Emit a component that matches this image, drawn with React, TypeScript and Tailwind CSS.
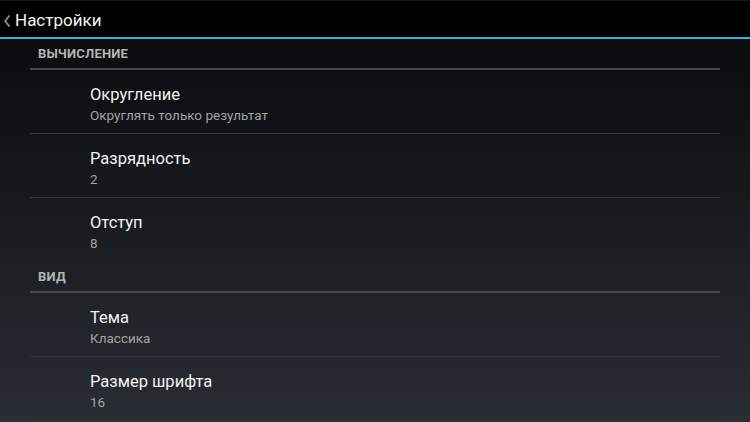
const font = { fontFamily: "Roboto, 'Noto Sans', sans-serif" }

type Item = { title: string; summary: string; last?: boolean }

const sections: { name: string; items: Item[] }[] = [
    {
        name: 'Вычисление',
        items: [
            { title: 'Округление', summary: 'Округлять только результат' },
            { title: 'Разрядность', summary: '2' },
            { title: 'Отступ', summary: '8', last: true },
        ],
    },
    {
        name: 'Вид',
        items: [
            { title: 'Тема', summary: 'Классика' },
            { title: 'Размер шрифта', summary: '16' },
        ],
    },
]

function Pref({ item }: { item: Item }) {
    return (
        <div className={item.last ? 'h-[64px]' : 'h-[64px] border-b border-[#33363a]'}>
            <div className="pl-[60px] pt-[15px]">
                <p className="text-[16.5px] leading-[20px] text-[#f2f2f2]">{item.title}</p>
                <p className="mt-[1px] text-[13.5px] leading-[18px] text-[#a3a3a3]">{item.summary}</p>
            </div>
        </div>
    )
}

export default function App() {
    return (
        <div className="w-[750px] h-[422px] overflow-hidden flex flex-col bg-black" style={font}>
            <div className="h-[37px] shrink-0 bg-black border-t border-[#151515] flex items-center pt-[3px]">
                <svg className="ml-[3px] w-[8px] h-[14px]" viewBox="0 0 8 14" fill="none">
                    <path d="M6.5 1.5 L2.2 7 L6.5 12.5" stroke="#8c8c8c" strokeWidth="1.9" />
                </svg>
                <span className="ml-[4px] text-[17px] text-[#f4f4f4]">Настройки</span>
            </div>
            <div className="h-[2px] shrink-0 bg-[#33b5e5]" />
            <div className="flex-1 bg-gradient-to-b from-[#0b0c0e] to-[#292d34] px-[30px]">
                {sections.map((s) => (
                    <div key={s.name}>
                        <div className="h-[31px] flex items-center pl-2 border-b-2 border-[#46484b]">
                            <span className="text-[13px] font-bold uppercase text-[#b4b4b4] tracking-[0.2px]">{s.name}</span>
                        </div>
                        {s.items.map((it) => (
                            <Pref key={it.title} item={it} />
                        ))}
                    </div>
                ))}
            </div>
        </div>
    )
}
